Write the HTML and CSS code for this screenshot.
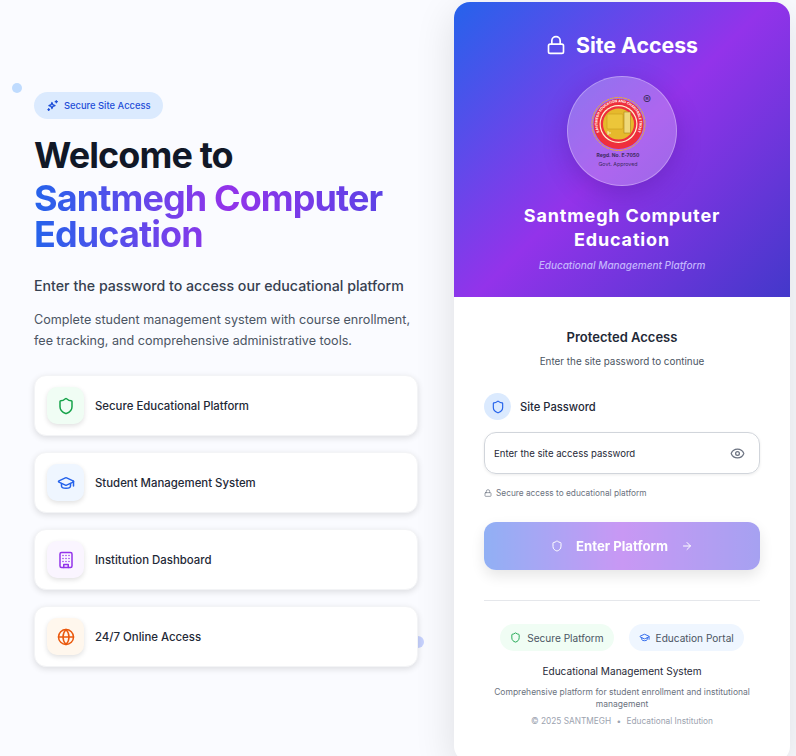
FILE: index.html
```html
<!DOCTYPE html>
<html lang="en">

<head>
    <meta charset="UTF-8">
    <meta name="viewport" content="width=device-width, initial-scale=1.0">
    <title>Site Access</title>
    <link rel="stylesheet" href="styles.css">
</head>

<body>
    <span class="dot dot-blue"></span>
    <span class="dot dot-indigo"></span>

    <div class="page">
        <section class="intro">
            <div class="badge">
                <svg class="badge-icon" viewBox="0 0 24 24" fill="none" stroke="currentColor" stroke-width="2.4" stroke-linecap="round" stroke-linejoin="round">
                    <path d="M11 6.5l1.6 4 4 1.6-4 1.6-1.6 4-1.6-4-4-1.6 4-1.6z" />
                    <path d="M19 3v4M17 5h4M5 18v3M3.5 19.5h3" />
                </svg>
                Secure Site Access
            </div>

            <h1 class="headline">Welcome to</h1>
            <h1 class="headline brand"><span class="brand-text">Santmegh Computer Education</span></h1>

            <p class="lead">Enter the password to access our educational platform</p>
            <p class="summary">Complete student management system with course enrollment, fee tracking, and comprehensive administrative tools.</p>

            <div class="features">
                <div class="feature">
                    <div class="feature-icon green">
                        <svg viewBox="0 0 24 24" fill="none" stroke="currentColor" stroke-width="2" stroke-linecap="round" stroke-linejoin="round">
                            <path d="M20 13c0 5-3.5 7.5-7.66 8.95a1 1 0 0 1-.67-.01C7.5 20.5 4 18 4 13V6a1 1 0 0 1 1-1c2 0 4.500-1.200 6.240-2.720a1.170 1.170 0 0 1 1.520 0C14.510 3.810 17 5 19 5a1 1 0 0 1 1 1z" />
                        </svg>
                    </div>
                    <span>Secure Educational Platform</span>
                </div>
                <div class="feature">
                    <div class="feature-icon blue">
                        <svg viewBox="0 0 24 24" fill="none" stroke="currentColor" stroke-width="2" stroke-linecap="round" stroke-linejoin="round">
                            <path d="M21.420 10.920a1 1 0 0 0-.02-1.840L12.830 5.180a2 2 0 0 0-1.660 0L2.600 9.080a1 1 0 0 0 0 1.830l8.570 3.910a2 2 0 0 0 1.660 0z" />
                            <path d="M22 10v6" />
                            <path d="M6 12.500V16a6 3 0 0 0 12 0v-3.500" />
                        </svg>
                    </div>
                    <span>Student Management System</span>
                </div>
                <div class="feature">
                    <div class="feature-icon purple">
                        <svg viewBox="0 0 24 24" fill="none" stroke="currentColor" stroke-width="2" stroke-linecap="round" stroke-linejoin="round">
                            <rect x="4" y="2" width="16" height="20" rx="2" />
                            <path d="M9 22v-4h6v4M8 6h.01M12 6h.01M16 6h.01M8 10h.01M12 10h.01M16 10h.01M8 14h.01M12 14h.01M16 14h.01" />
                        </svg>
                    </div>
                    <span>Institution Dashboard</span>
                </div>
                <div class="feature">
                    <div class="feature-icon orange">
                        <svg viewBox="0 0 24 24" fill="none" stroke="currentColor" stroke-width="2" stroke-linecap="round" stroke-linejoin="round">
                            <circle cx="12" cy="12" r="10" />
                            <path d="M12 2a14.500 14.500 0 0 0 0 20 14.500 14.500 0 0 0 0-20M2 12h20" />
                        </svg>
                    </div>
                    <span>24/7 Online Access</span>
                </div>
            </div>
        </section>

        <section class="card">
            <header class="card-head">
                <h2 class="card-title">
                    <svg viewBox="0 0 24 24" fill="none" stroke="currentColor" stroke-width="2" stroke-linecap="round" stroke-linejoin="round">
                        <rect x="3" y="11" width="18" height="11" rx="2" />
                        <path d="M7 11V7a5 5 0 0 1 10 0v4" />
                    </svg>
                    Site Access
                </h2>
                <div class="logo">
                    <svg class="seal" viewBox="0 -6 64 64">
                        <defs>
                            <path id="seal-ring" d="M9.500 38a21 21 0 1 1 36 0" />
                        </defs>
                        <circle cx="27.500" cy="28" r="26.500" fill="none" stroke="#e8a93a" stroke-width="1" stroke-dasharray="4 .6" />
                        <circle cx="27.500" cy="28" r="25" fill="#ee2f3c" />
                        <circle cx="27.500" cy="28" r="19" fill="#fff3d0" />
                        <circle cx="27.500" cy="28" r="17.800" fill="#ee2f3c" />
                        <circle cx="27.500" cy="28" r="15.500" fill="#e6b92c" />
                        <rect x="16" y="18" width="16" height="15" rx="1" fill="#ecc63a" stroke="#c99a1e" stroke-width=".6" />
                        <rect x="33" y="16" width="6.500" height="21" fill="#efd87a" stroke="#a9851c" stroke-width=".6" />
                        <path d="M17 37h3M17 35v4" stroke="#fff3d0" stroke-width=".8" fill="none" />
                        <text class="seal-text">
                            <textPath href="#seal-ring" startOffset="50%" text-anchor="middle">SANTMEGH EDUCATION AND CHARITABLE TRUST</textPath>
                        </text>
                        <text class="seal-reg" x="56" y="8" text-anchor="middle">®</text>
                    </svg>
                    <span class="logo-reg">Regd. No. E-7050</span>
                    <span class="logo-gov">Govt. Approved</span>
                </div>
                <h3 class="card-name">Santmegh Computer Education</h3>
                <p class="card-tag">Educational Management Platform</p>
            </header>

            <div class="card-body">
                <h4 class="form-title">Protected Access</h4>
                <p class="form-sub">Enter the site password to continue</p>

                <div class="field-label">
                    <span class="field-icon">
                        <svg viewBox="0 0 24 24" fill="none" stroke="currentColor" stroke-width="2" stroke-linecap="round" stroke-linejoin="round">
                            <path d="M20 13c0 5-3.500 7.500-7.660 8.950a1 1 0 0 1-.67-.01C7.500 20.500 4 18 4 13V6a1 1 0 0 1 1-1c2 0 4.500-1.200 6.240-2.720a1.170 1.170 0 0 1 1.520 0C14.510 3.810 17 5 19 5a1 1 0 0 1 1 1z" />
                        </svg>
                    </span>
                    Site Password
                </div>

                <div class="input-wrap">
                    <input class="password" type="password" placeholder="Enter the site access password">
                    <svg class="eye" viewBox="0 0 24 24" fill="none" stroke="currentColor" stroke-width="2" stroke-linecap="round" stroke-linejoin="round">
                        <path d="M2.060 12.350a1 1 0 0 1 0-.7 10.750 10.750 0 0 1 19.880 0 1 1 0 0 1 0 .7 10.750 10.750 0 0 1-19.880 0" />
                        <circle cx="12" cy="12" r="3" />
                    </svg>
                </div>

                <p class="hint">
                    <svg viewBox="0 0 24 24" fill="none" stroke="currentColor" stroke-width="2" stroke-linecap="round" stroke-linejoin="round">
                        <rect x="3" y="11" width="18" height="11" rx="2" />
                        <path d="M7 11V7a5 5 0 0 1 10 0v4" />
                    </svg>
                    Secure access to educational platform
                </p>

                <button class="enter" type="button">
                    <svg viewBox="0 0 24 24" fill="none" stroke="currentColor" stroke-width="2" stroke-linecap="round" stroke-linejoin="round">
                        <path d="M20 13c0 5-3.500 7.500-7.660 8.950a1 1 0 0 1-.67-.01C7.500 20.500 4 18 4 13V6a1 1 0 0 1 1-1c2 0 4.500-1.200 6.240-2.720a1.170 1.170 0 0 1 1.520 0C14.510 3.810 17 5 19 5a1 1 0 0 1 1 1z" />
                    </svg>
                    <span>Enter Platform</span>
                    <svg viewBox="0 0 24 24" fill="none" stroke="currentColor" stroke-width="2" stroke-linecap="round" stroke-linejoin="round">
                        <path d="M5 12h14M12 5l7 7-7 7" />
                    </svg>
                </button>

                <div class="card-foot">
                    <div class="pills">
                        <span class="pill pill-green">
                            <svg viewBox="0 0 24 24" fill="none" stroke="currentColor" stroke-width="2" stroke-linecap="round" stroke-linejoin="round">
                                <path d="M20 13c0 5-3.500 7.500-7.660 8.950a1 1 0 0 1-.67-.01C7.500 20.500 4 18 4 13V6a1 1 0 0 1 1-1c2 0 4.500-1.200 6.240-2.720a1.170 1.170 0 0 1 1.520 0C14.510 3.810 17 5 19 5a1 1 0 0 1 1 1z" />
                            </svg>
                            Secure Platform
                        </span>
                        <span class="pill pill-blue">
                            <svg viewBox="0 0 24 24" fill="none" stroke="currentColor" stroke-width="2" stroke-linecap="round" stroke-linejoin="round">
                                <path d="M21.420 10.920a1 1 0 0 0-.02-1.840L12.830 5.180a2 2 0 0 0-1.660 0L2.600 9.080a1 1 0 0 0 0 1.830l8.570 3.910a2 2 0 0 0 1.660 0z" />
                                <path d="M22 10v6" />
                                <path d="M6 12.500V16a6 3 0 0 0 12 0v-3.500" />
                            </svg>
                            Education Portal
                        </span>
                    </div>
                    <p class="foot-title">Educational Management System</p>
                    <p class="foot-text">Comprehensive platform for student enrollment and institutional management</p>
                    <p class="foot-copy">© 2025 SANTMEGH <span class="sep">•</span> Educational Institution</p>
                </div>
            </div>
        </section>
    </div>
</body>

</html>
```

FILE: styles.css
```css
* {
    box-sizing: border-box;
}

html,
body {
    height: 100%;
}

body {
    margin: 0;
    background: #fafbff;
    font-family: Inter, "Noto Sans", sans-serif;
    color: #1f2937;
    overflow: hidden;
    position: relative;
}

h1,
h2,
h3,
h4,
p {
    margin: 0;
}

svg {
    display: block;
    flex-shrink: 0;
}

.dot {
    position: absolute;
    border-radius: 50%;
}

.dot-blue {
    left: 12px;
    top: 83px;
    width: 10px;
    height: 10px;
    background: #bfdbfe;
}

.dot-indigo {
    left: 412px;
    top: 636px;
    width: 12px;
    height: 12px;
    background: #c7d2fe;
}

.page {
    display: flex;
    align-items: flex-start;
    padding: 2px 0 0 34px;
    position: relative;
}

/* left column */
.intro {
    width: 384px;
    margin-right: 36px;
    padding-top: 90px;
}

.badge {
    display: inline-flex;
    align-items: center;
    gap: 5px;
    height: 27px;
    padding: 0 12px;
    border-radius: 14px;
    background: #dbeafe;
    color: #1d4ed8;
    font-size: 9.400px;
    font-weight: 500;
}

.badge-icon {
    width: 13px;
    height: 13px;
}

.headline {
    font-size: 36px;
    line-height: 36px;
    font-weight: 700;
    letter-spacing: -0.9px;
    color: #111827;
}

.intro .badge + .headline {
    margin-top: 18px;
}

.brand {
    margin-top: 7px;
}

.brand-text {
    display: block;
    background: linear-gradient(90deg, #2563eb, #9333ea 50%, #4f46e5);
    -webkit-background-clip: text;
    background-clip: text;
    color: transparent;
}

.lead {
    margin-top: 23px;
    font-size: 14.200px;
    line-height: 22px;
    font-weight: 500;
    color: #374151;
}

.summary {
    margin-top: 12px;
    font-size: 12.600px;
    line-height: 21px;
    color: #4b5563;
}

.features {
    margin-top: 24px;
    display: flex;
    flex-direction: column;
    gap: 16px;
}

.feature {
    display: flex;
    align-items: center;
    gap: 11px;
    height: 61px;
    padding: 0 12px;
    background: #fff;
    border: 1px solid #f3f4f6;
    border-radius: 12px;
    box-shadow: 0 2px 6px rgba(0, 0, 0, 0.12);
    font-size: 11.400px;
    font-weight: 500;
    color: #1f2937;
}

.feature-icon {
    width: 37px;
    height: 37px;
    border-radius: 10px;
    display: flex;
    align-items: center;
    justify-content: center;
    box-shadow: 0 2px 5px rgba(0, 0, 0, 0.12);
}

.feature-icon svg {
    width: 18px;
    height: 18px;
}

.green {
    background: #f0fdf4;
    color: #16a34a;
}

.blue {
    background: #eff6ff;
    color: #2563eb;
}

.purple {
    background: #faf5ff;
    color: #9333ea;
}

.orange {
    background: #fff7ed;
    color: #ea580c;
}

/* right card */
.card {
    width: 336px;
    height: 760px;
    background: #fff;
    border-radius: 16px;
    box-shadow: 0 10px 40px rgba(0, 0, 0, 0.12);
    overflow: hidden;
}

.card-head {
    height: 295px;
    padding-top: 29px;
    text-align: center;
    color: #fff;
    background: linear-gradient(135deg, #2563eb, #9333ea 50%, #4338ca);
}

.card-title {
    display: flex;
    align-items: center;
    justify-content: center;
    gap: 10px;
    font-size: 21.300px;
    line-height: 28px;
    font-weight: 700;
}

.card-title svg {
    width: 20px;
    height: 20px;
}

.logo {
    width: 110px;
    height: 110px;
    margin: 17px auto 0;
    padding-top: 13px;
    border-radius: 50%;
    background: rgba(255, 255, 255, 0.25);
    border: 1px solid rgba(255, 255, 255, 0.3);
    box-shadow: 0 8px 24px rgba(60, 20, 140, 0.3);
    display: flex;
    flex-direction: column;
    align-items: center;
}

.seal {
    width: 64px;
    height: 64px;
    margin-left: 2px;
    margin-bottom: -3px;
}

.seal-text {
    font-size: 3.400px;
    font-weight: 700;
    fill: #fff;
}

.seal-reg {
    font-size: 12px;
    fill: #3b2a60;
}

.logo-reg {
    margin-right: 8px;
    font-size: 5px;
    line-height: 9px;
    font-weight: 700;
    color: #3b2a60;
}

.logo-gov {
    margin-right: 8px;
    font-size: 5.300px;
    line-height: 9px;
    color: #3b2a60;
}

.card-name {
    width: 240px;
    margin: 18px auto 0;
    font-size: 18px;
    line-height: 24px;
    font-weight: 700;
    letter-spacing: 0.85px;
}

.card-tag {
    margin-top: 6px;
    font-size: 10px;
    line-height: 15px;
    font-style: italic;
    font-weight: 500;
    color: #c4b5fd;
}

.card-body {
    padding: 32px 30px 0;
}

.form-title {
    text-align: center;
    font-size: 13px;
    line-height: 17px;
    font-weight: 600;
    color: #1f2937;
}

.form-sub {
    margin-top: 8px;
    text-align: center;
    font-size: 9.900px;
    line-height: 14px;
    color: #4b5563;
}

.field-label {
    margin-top: 25px;
    display: flex;
    align-items: center;
    gap: 9px;
    font-size: 11.200px;
    font-weight: 500;
    color: #1f2937;
}

.field-icon {
    width: 27px;
    height: 27px;
    border-radius: 50%;
    background: #dbeafe;
    color: #2563eb;
    display: flex;
    align-items: center;
    justify-content: center;
}

.field-icon svg {
    width: 14px;
    height: 14px;
}

.input-wrap {
    margin-top: 12px;
    display: flex;
    align-items: center;
    height: 42px;
    padding: 0 14px 0 9px;
    border: 1px solid #d1d5db;
    border-radius: 12px;
    box-shadow: 0 1px 3px rgba(0, 0, 0, 0.08);
}

.password {
    flex: 1;
    min-width: 0;
    border: none;
    padding: 0;
    font: inherit;
    font-size: 9.600px;
    outline: none;
}

.password::placeholder {
    color: #1f2937;
    opacity: 1;
}

.eye {
    width: 15px;
    height: 15px;
    color: #6b7280;
}

.hint {
    margin-top: 12px;
    display: flex;
    align-items: center;
    gap: 4px;
    font-size: 8.300px;
    line-height: 14px;
    color: #6b7280;
}

.hint svg {
    width: 8px;
    height: 8px;
}

.enter {
    margin-top: 22px;
    width: 100%;
    height: 48px;
    border: none;
    border-radius: 12px;
    display: flex;
    align-items: center;
    justify-content: center;
    gap: 13px;
    font: inherit;
    font-size: 13.200px;
    font-weight: 700;
    color: #fff;
    background: linear-gradient(90deg, #2563eb, #9333ea 50%, #4f46e5);
    opacity: 0.5;
    box-shadow: 0 6px 14px rgba(0, 0, 0, 0.2);
}

.enter svg {
    width: 12px;
    height: 12px;
}

.card-foot {
    margin-top: 30px;
    padding-top: 23px;
    border-top: 1px solid #e5e7eb;
    text-align: center;
}

.pills {
    display: flex;
    justify-content: center;
    gap: 15px;
}

.pill {
    display: inline-flex;
    align-items: center;
    gap: 6px;
    height: 27px;
    padding: 0 10px;
    border-radius: 14px;
    font-size: 10.100px;
    color: #4b5563;
}

.pill svg {
    width: 11px;
    height: 11px;
}

.pill-green {
    background: #f0fdf4;
}

.pill-green svg {
    color: #16a34a;
}

.pill-blue {
    background: #eff6ff;
}

.pill-blue svg {
    color: #2563eb;
}

.foot-title {
    margin-top: 12px;
    font-size: 10.100px;
    line-height: 16px;
    color: #1f2937;
}

.foot-text {
    margin-top: 7px;
    font-size: 8.500px;
    line-height: 12px;
    color: #6b7280;
}

.foot-copy {
    margin-top: 5px;
    font-size: 8.300px;
    line-height: 12px;
    color: #9ca3af;
}

.sep {
    margin: 0 3px;
}
```
